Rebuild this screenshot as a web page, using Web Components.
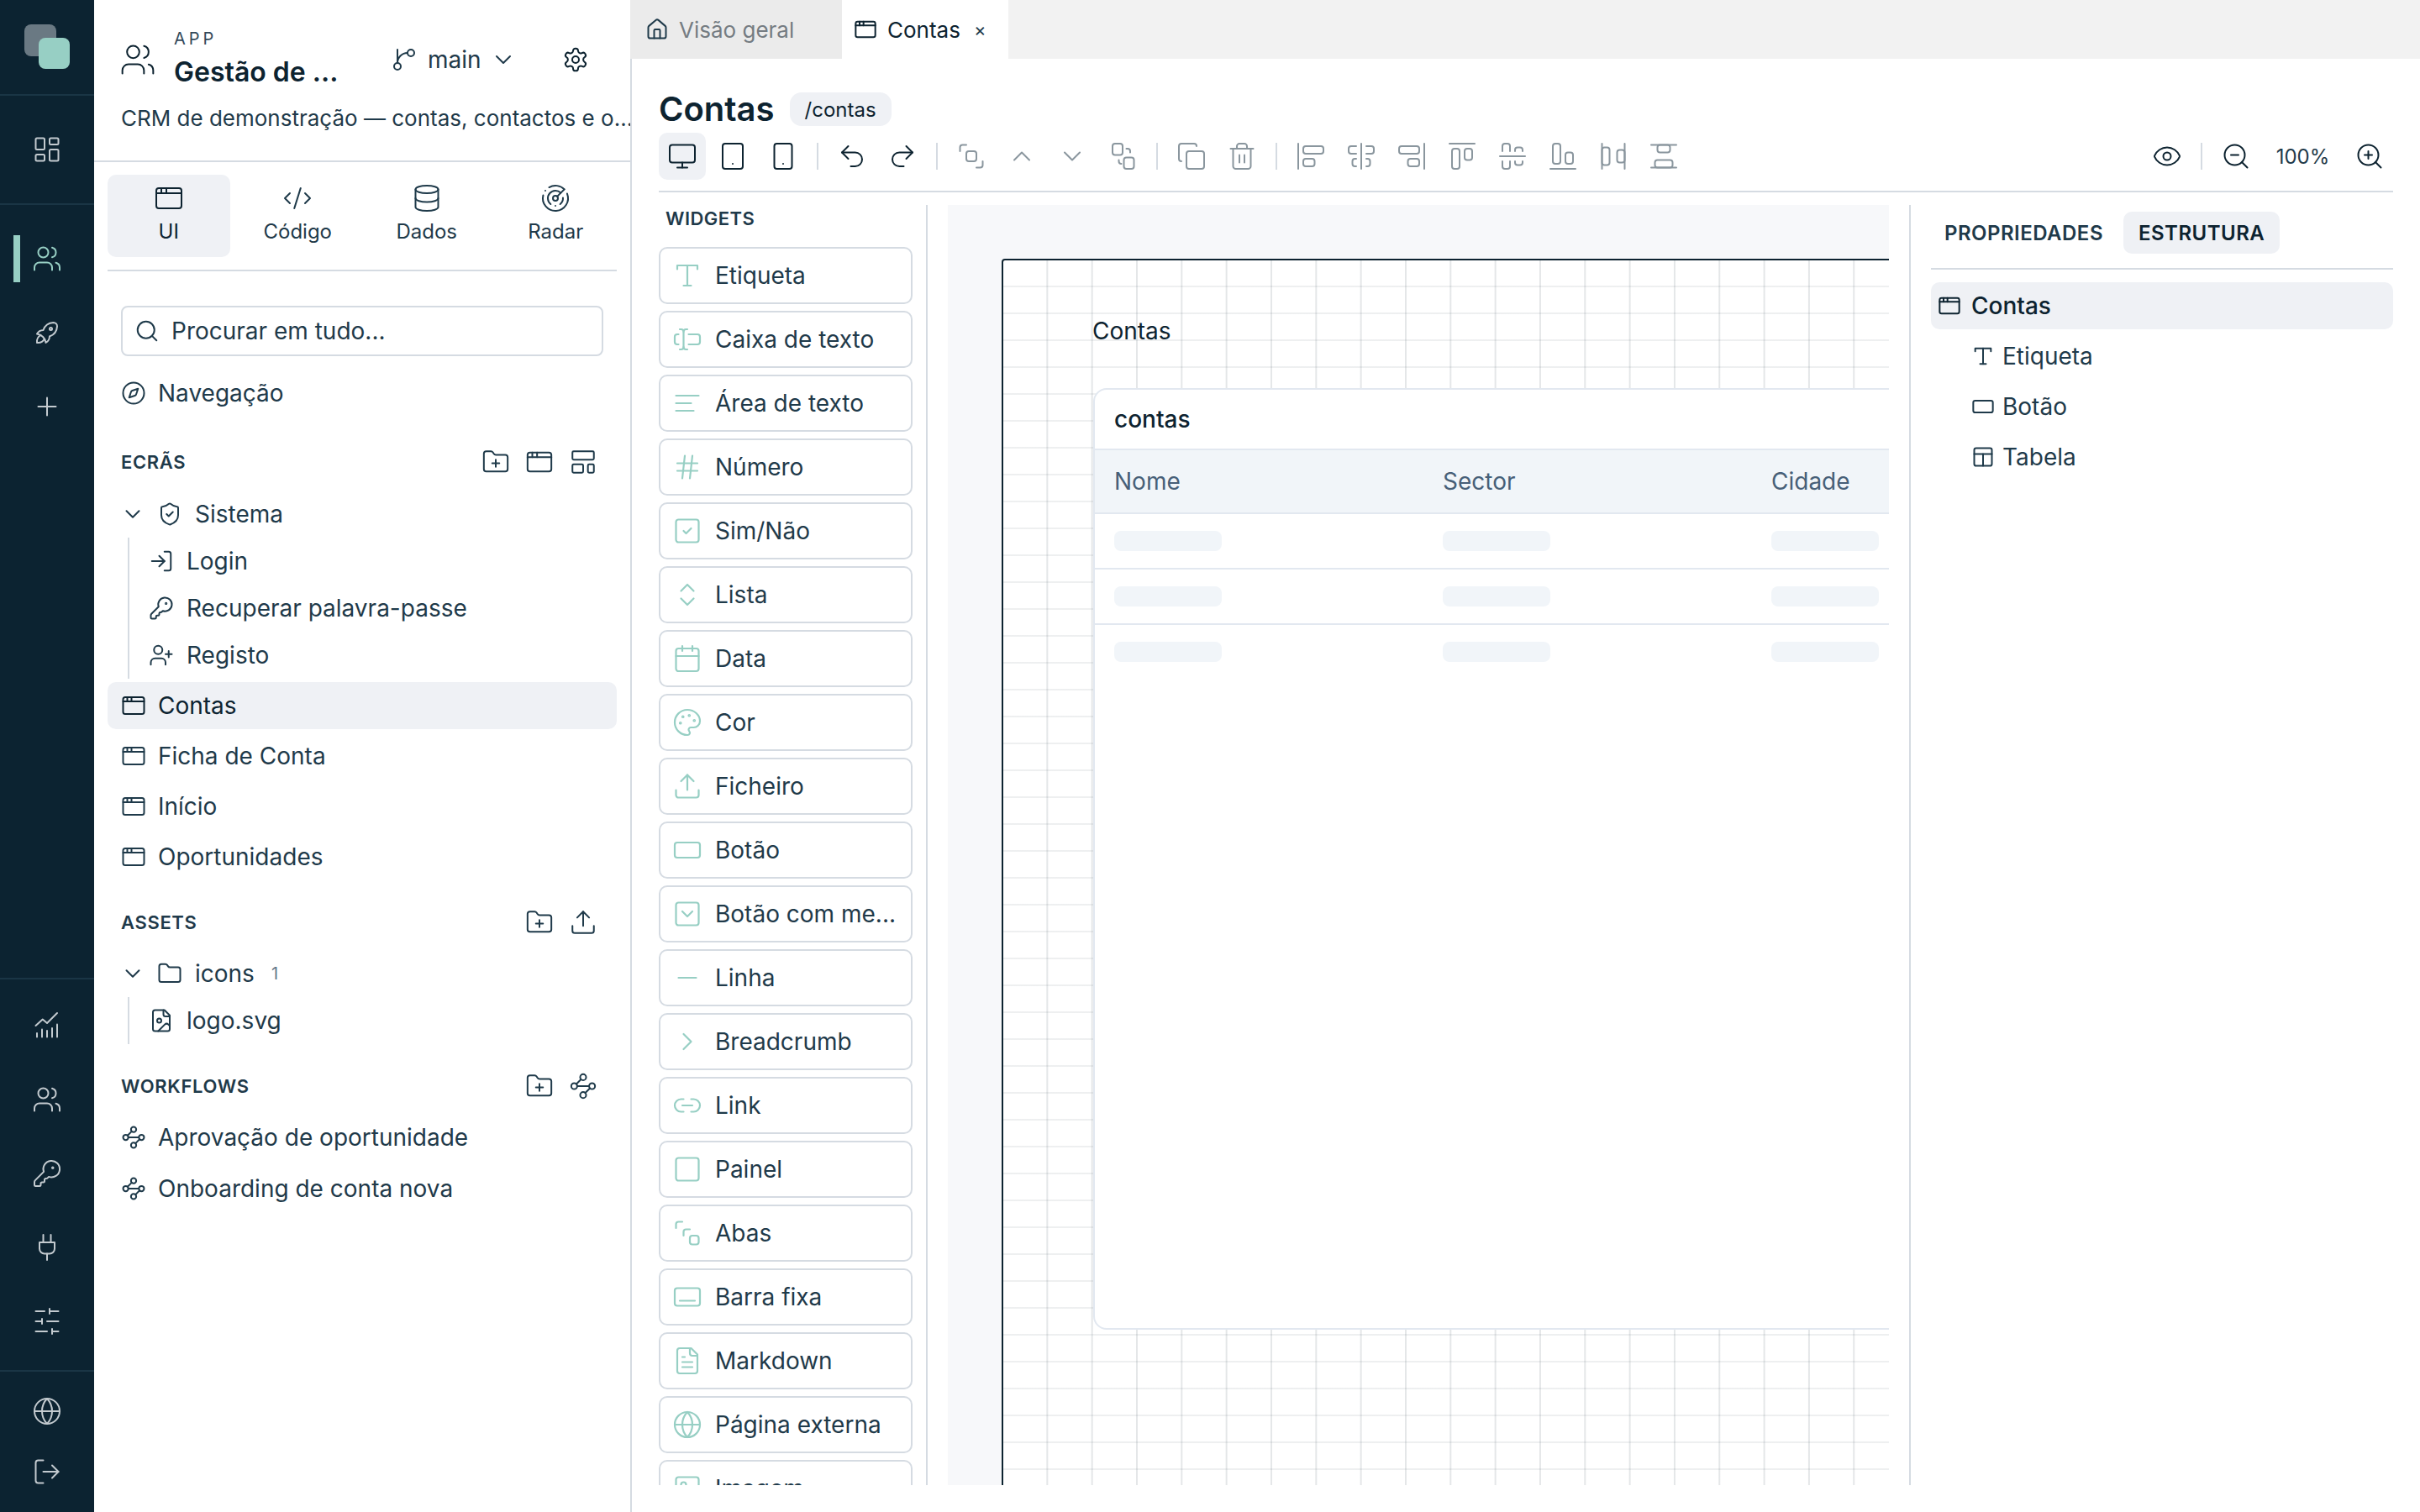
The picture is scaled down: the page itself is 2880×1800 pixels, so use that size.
<!doctype html>
<html lang="pt">
<head>
<meta charset="utf-8">
<title>Gestão de Contas</title>
<style>
html,body{margin:0;padding:0;width:2880px;height:1800px;overflow:hidden;background:#fff;font-family:Inter,"Noto Sans",sans-serif;color:#1f3a4a}
</style>
</head>
<body>
<app-shell>
	<app-rail slot="rail"></app-rail>
	<app-sidebar slot="side">
		<search-box>Procurar em tudo...</search-box>
		<tree-row icon="compass" style="margin-top:16px">Navegação</tree-row>

		<section-head icons="folderPlus window template" style="margin-top:32px">ECRÃS</section-head>
		<tree-row icon="shield" chevron style="margin-top:12px">Sistema</tree-row>
		<tree-group>
			<tree-row icon="login" child>Login</tree-row>
			<tree-row icon="key" child>Recuperar palavra-passe</tree-row>
			<tree-row icon="userPlus" child>Registo</tree-row>
		</tree-group>
		<tree-row icon="window" active style="margin-top:4px">Contas</tree-row>
		<tree-row icon="window" style="margin-top:4px">Ficha de Conta</tree-row>
		<tree-row icon="window" style="margin-top:4px">Início</tree-row>
		<tree-row icon="window" style="margin-top:4px">Oportunidades</tree-row>

		<section-head icons="folderPlus upload" style="margin-top:28px">ASSETS</section-head>
		<tree-row icon="folder" chevron count="1" style="margin-top:11px">icons</tree-row>
		<tree-group>
			<tree-row icon="fileImage" child>logo.svg</tree-row>
		</tree-group>

		<section-head icons="folderPlus flow" style="margin-top:28px">WORKFLOWS</section-head>
		<tree-row icon="flow" style="margin-top:11px">Aprovação de oportunidade</tree-row>
		<tree-row icon="flow" style="margin-top:5px">Onboarding de conta nova</tree-row>
	</app-sidebar>
	<app-main slot="main">
		<widget-panel slot="widgets">
			<widget-item icon="type">Etiqueta</widget-item>
			<widget-item icon="textInput">Caixa de texto</widget-item>
			<widget-item icon="lines">Área de texto</widget-item>
			<widget-item icon="hash">Número</widget-item>
			<widget-item icon="squareCheck">Sim/Não</widget-item>
			<widget-item icon="upDown">Lista</widget-item>
			<widget-item icon="calendar">Data</widget-item>
			<widget-item icon="palette">Cor</widget-item>
			<widget-item icon="upload">Ficheiro</widget-item>
			<widget-item icon="rect">Botão</widget-item>
			<widget-item icon="squareDown">Botão com me...</widget-item>
			<widget-item icon="minus">Linha</widget-item>
			<widget-item icon="right">Breadcrumb</widget-item>
			<widget-item icon="link">Link</widget-item>
			<widget-item icon="square">Painel</widget-item>
			<widget-item icon="tabs">Abas</widget-item>
			<widget-item icon="bar">Barra fixa</widget-item>
			<widget-item icon="fileText">Markdown</widget-item>
			<widget-item icon="globe">Página externa</widget-item>
			<widget-item icon="image">Imagem</widget-item>
		</widget-panel>
		<design-canvas slot="canvas"></design-canvas>
		<outline-panel slot="outline"></outline-panel>
	</app-main>
</app-shell>

<script>
const W = 'M20 20a2 2 0 0 0 2-2V8a2 2 0 0 0-2-2h-7.9a2 2 0 0 1-1.69-.9L9.6 3.9A2 2 0 0 0 7.93 3H4a2 2 0 0 0-2 2v13a2 2 0 0 0 2 2Z';
const p = (...d) => d.map(x => `<path d="${x}"/>`).join("");
const r = (x, y, w, h, rx = 2) => `<rect x="${x}" y="${y}" width="${w}" height="${h}" rx="${rx}"/>`;
const c = (x, y, n) => `<circle cx="${x}" cy="${y}" r="${n}"/>`;

const ICONS = {
	dashboard: r(3,3,7,9,1) + r(14,3,7,5,1) + r(14,12,7,9,1) + r(3,16,7,5,1),
	users: p('M16 21v-2a4 4 0 0 0-4-4H6a4 4 0 0 0-4 4v2','M22 21v-2a4 4 0 0 0-3-3.87','M16 3.13a4 4 0 0 1 0 7.75') + c(9,7,4),
	rocket: p('M4 13a8 8 0 0 1 7 7a6 6 0 0 0 3-5a9 9 0 0 0 6-8a3 3 0 0 0-3-3a9 9 0 0 0-8 6a6 6 0 0 0-5 3','M7 14a6 6 0 0 0-3 6a6 6 0 0 0 6-3') + c(15,9,1),
	plus: p('M12 5v14','M5 12h14'),
	chart: p('M3 12l5.5-5 3.5 3 8-8','M4 21v-3','M8 21v-6','M12 21v-5','M16 21v-7','M20 21v-10'),
	key: p('M2.586 17.414A2 2 0 0 0 2 18.828V21a1 1 0 0 0 1 1h3a1 1 0 0 0 1-1v-1a1 1 0 0 1 1-1h1a1 1 0 0 0 1-1v-1a1 1 0 0 1 1-1h.172a2 2 0 0 0 1.414-.586l.814-.814a6.5 6.5 0 1 0-4-4z') + c(16.5,7.5,.5),
	plug: p('M12 22v-5','M9 8V2','M15 8V2','M18 8v5a4 4 0 0 1-4 4h-4a4 4 0 0 1-4-4V8Z'),
	sliders: p('M21 4h-7','M10 4H3','M21 12h-9','M8 12H3','M21 20h-5','M12 20H3','M14 2v4','M8 10v4','M16 18v4'),
	globe: c(12,12,10) + p('M12 2a14.5 14.5 0 0 0 0 20a14.5 14.5 0 0 0 0-20','M2 12h20'),
	logout: p('M9 21H5a2 2 0 0 1-2-2V5a2 2 0 0 1 2-2h4','m16 17 5-5-5-5','M21 12H9'),
	branch: p('M15 6a9 9 0 0 0-9 9V3') + c(18,6,3) + c(6,18,3),
	down: p('m6 9 6 6 6-6'),
	up: p('m18 15-6-6-6 6'),
	right: p('m9 18 6-6-6-6'),
	gear: p('M12.22 2h-.44a2 2 0 0 0-2 2v.18a2 2 0 0 1-1 1.73l-.43.25a2 2 0 0 1-2 0l-.15-.08a2 2 0 0 0-2.73.73l-.22.38a2 2 0 0 0 .73 2.73l.15.1a2 2 0 0 1 1 1.72v.51a2 2 0 0 1-1 1.74l-.15.09a2 2 0 0 0-.73 2.73l.22.38a2 2 0 0 0 2.73.73l.15-.08a2 2 0 0 1 2 0l.43.25a2 2 0 0 1 1 1.73V20a2 2 0 0 0 2 2h.44a2 2 0 0 0 2-2v-.18a2 2 0 0 1 1-1.73l.43-.25a2 2 0 0 1 2 0l.15.08a2 2 0 0 0 2.73-.73l.22-.39a2 2 0 0 0-.73-2.73l-.15-.08a2 2 0 0 1-1-1.74v-.5a2 2 0 0 1 1-1.74l.15-.09a2 2 0 0 0 .73-2.73l-.22-.38a2 2 0 0 0-2.73-.73l-.15.08a2 2 0 0 1-2 0l-.43-.25a2 2 0 0 1-1-1.73V4a2 2 0 0 0-2-2z') + c(12,12,3),
	window: r(2,4,20,16) + p('M2 8h20','M6 4v4','M10 4v4'),
	code: p('m18 16 4-4-4-4','m6 8-4 4 4 4','m14.5 4-5 16'),
	database: '<ellipse cx="12" cy="5" rx="9" ry="3"/>' + p('M3 5v14a9 3 0 0 0 18 0V5','M3 12a9 3 0 0 0 18 0'),
	radar: p('M19.07 4.93A10 10 0 0 0 6.99 3.34','M4 6h.01','M2.29 9.62A10 10 0 1 0 21.31 8.35','M16.24 7.76A6 6 0 1 0 8.23 16.67','M12 18h.01','M17.99 11.66A6 6 0 0 1 15.77 16.67','m13.41 10.59 5.66-5.66') + c(12,12,2),
	search: c(11,11,8) + p('m21 21-4.3-4.3'),
	compass: c(12,12,10) + p('m16.24 7.76-1.804 5.411a2 2 0 0 1-1.265 1.265L7.76 16.24l1.804-5.411a2 2 0 0 1 1.265-1.265z'),
	folder: p(W),
	folderPlus: p(W,'M12 10v6','M9 13h6'),
	template: r(3,3,18,7,1) + r(3,14,9,7,1) + r(16,14,5,7,1),
	shield: p('M20 13c0 5-3.5 7.5-7.66 8.95a1 1 0 0 1-.67-.01C7.5 20.5 4 18 4 13V6a1 1 0 0 1 1-1c2 0 4.5-1.2 6.24-2.72a1.17 1.17 0 0 1 1.52 0C14.51 3.81 17 5 19 5a1 1 0 0 1 1 1z','m9 12 2 2 4-4'),
	login: p('m10 17 5-5-5-5','M15 12H3','M15 3h4a2 2 0 0 1 2 2v14a2 2 0 0 1-2 2h-4'),
	userPlus: p('M16 21v-2a4 4 0 0 0-4-4H6a4 4 0 0 0-4 4v2','M19 8v6','M22 11h-6') + c(9,7,4),
	fileImage: p('M15 2H6a2 2 0 0 0-2 2v16a2 2 0 0 0 2 2h12a2 2 0 0 0 2-2V7Z','M14 2v4a2 2 0 0 0 2 2h4','m20 17-1.296-1.296a2.41 2.41 0 0 0-3.408 0L9 22') + c(10,12,2),
	upload: p('M21 15v4a2 2 0 0 1-2 2H5a2 2 0 0 1-2-2v-4','m17 8-5-5-5 5','M12 3v12'),
	flow: c(12,4.5,2.5) + c(4.5,12,2.5) + c(19.5,12,2.5) + c(12,19.5,2.5) + p('m10.2 6.3-3.9 3.9','M7 12h10','m13.8 17.7 3.9-3.9'),
	home: p('M15 21v-8a1 1 0 0 0-1-1h-4a1 1 0 0 0-1 1v8','M3 10a2 2 0 0 1 .709-1.528l7-5.999a2 2 0 0 1 2.582 0l7 5.999A2 2 0 0 1 21 10v9a2 2 0 0 1-2 2H5a2 2 0 0 1-2-2z'),
	monitor: r(2,3,20,14) + p('M8 21h8','M12 17v4'),
	tablet: r(4,2,16,20) + p('M12 18h.01'),
	phone: r(5,2,14,20) + p('M12 18h.01'),
	undo: p('M9 14 4 9l5-5','M4 9h10.5a5.5 5.5 0 0 1 0 11H11'),
	redo: p('m15 14 5-5-5-5','M20 9H9.5a5.5 5.5 0 0 0 0 11H13'),
	group: p('M3 8V5a2 2 0 0 1 2-2h3','M21 16v3a2 2 0 0 1-2 2h-3') + r(8,8,8,8),
	ungroup: r(4,2,8,9) + r(13,13,8,9) + p('M15 6h1a2 2 0 0 1 2 2v1','M9 15v1a2 2 0 0 0 2 2h0'),
	copy: r(8,8,14,14) + p('M4 16c-1.1 0-2-.9-2-2V4c0-1.1.9-2 2-2h10c1.1 0 2 .9 2 2'),
	trash: p('M3 6h18','M19 6v14c0 1-1 2-2 2H7c-1 0-2-1-2-2V6','M8 6V4c0-1 1-2 2-2h4c1 0 2 1 2 2v2','M10 11v6','M14 11v6'),
	alignL: r(6,14,9,6) + r(6,4,16,6) + p('M2 2v20'),
	alignC: p('M12 2v20','M8 10H4a2 2 0 0 1-2-2V6c0-1.1.9-2 2-2h4','M16 10h4a2 2 0 0 0 2-2V6a2 2 0 0 0-2-2h-4','M8 20H7a2 2 0 0 1-2-2v-2c0-1.1.9-2 2-2h1','M16 14h1a2 2 0 0 1 2 2v2a2 2 0 0 1-2 2h-1'),
	alignR: r(2,4,16,6) + r(9,14,9,6) + p('M22 22V2'),
	alignT: r(4,6,6,16) + r(14,6,6,9) + p('M22 2H2'),
	alignM: p('M2 12h20','M10 16v4a2 2 0 0 1-2 2H6a2 2 0 0 1-2-2v-4','M10 8V4a2 2 0 0 0-2-2H6a2 2 0 0 0-2 2v4','M20 16v1a2 2 0 0 1-2 2h-2a2 2 0 0 1-2-2v-1','M14 8V7c0-1.1.9-2 2-2h2a2 2 0 0 1 2 2v1'),
	alignB: r(4,2,6,16) + r(14,9,6,9) + p('M22 22H2'),
	spaceH: r(3,5,6,14) + r(15,7,6,10) + p('M3 2v20','M21 2v20'),
	spaceV: r(5,15,14,6) + r(7,3,10,6) + p('M2 21h20','M2 3h20'),
	eye: p('M2.062 12.348a1 1 0 0 1 0-.696 10.75 10.75 0 0 1 19.876 0 1 1 0 0 1 0 .696 10.75 10.75 0 0 1-19.876 0') + c(12,12,3),
	zoomOut: c(11,11,8) + p('m21 21-4.35-4.35','M8 11h6'),
	zoomIn: c(11,11,8) + p('m21 21-4.35-4.35','M8 11h6','M11 8v6'),
	type: p('M4 7V4h16v3','M9 20h6','M12 4v16'),
	textInput: p('M12 20h-1a2 2 0 0 1-2-2 2 2 0 0 1-2 2H6','M13 8h7a2 2 0 0 1 2 2v4a2 2 0 0 1-2 2h-7','M5 16H4a2 2 0 0 1-2-2v-4a2 2 0 0 1 2-2h1','M6 4h1a2 2 0 0 1 2 2 2 2 0 0 1 2-2h1','M9 6v12'),
	lines: p('M21 6H3','M15 12H3','M17 18H3'),
	hash: p('M4 9h16','M4 15h16','M10 3 8 21','M16 3l-2 18'),
	squareCheck: r(3,3,18,18) + p('m9 12 2 2 4-4'),
	upDown: p('m7 15 5 5 5-5','m7 9 5-5 5 5'),
	calendar: r(3,4,18,18) + p('M8 2v4','M16 2v4','M3 10h18'),
	palette: p('M12 22a1 1 0 0 1 0-20 10 9 0 0 1 10 9 5 5 0 0 1-5 5h-2.25a1.75 1.75 0 0 0-1.4 2.8l.3.4a1.75 1.75 0 0 1-1.4 2.8z') + c(13.5,6.5,.5) + c(17.5,10.5,.5) + c(6.5,12.5,.5) + c(8.5,7.5,.5),
	rect: r(2,6,20,12),
	squareDown: r(3,3,18,18) + p('m16 10-4 4-4-4'),
	minus: p('M5 12h14'),
	link: p('M9 17H7A5 5 0 0 1 7 7h2','M15 7h2a5 5 0 1 1 0 10h-2','M8 12h8'),
	square: r(3,3,18,18),
	tabs: p('M3 8V5a2 2 0 0 1 2-2h3','M9 14v-3a2 2 0 0 1 2-2h3') + r(14,14,7,7),
	bar: r(2,5,20,14) + p('M6 15h12'),
	fileText: p('M15 2H6a2 2 0 0 0-2 2v16a2 2 0 0 0 2 2h12a2 2 0 0 0 2-2V7Z','M14 2v4a2 2 0 0 0 2 2h4','M10 9H8','M16 13H8','M16 17H8'),
	image: r(3,3,18,18) + c(9,9,2) + p('m21 15-3.086-3.086a2 2 0 0 0-2.828 0L6 21'),
	table: r(3,3,18,18) + p('M3 9h18','M12 9v12'),
};

class XIcon extends HTMLElement {
	constructor() {
		super();
		this.attachShadow({ mode: "open" });
	}
	connectedCallback() {
		const size = this.getAttribute("size") || 30;
		const sw = this.getAttribute("sw") || 2;
		this.shadowRoot.innerHTML = `
		<style>
		:host { display: inline-flex; flex: none; width: ${size}px; height: ${size}px; }
		svg { width: 100%; height: 100%; fill: none; stroke: currentColor; stroke-width: ${sw}; stroke-linecap: round; stroke-linejoin: round; }
		svg * { vector-effect: non-scaling-stroke; }
		</style>
		<svg viewBox="0 0 24 24">${ICONS[this.getAttribute("name")] || ""}</svg>`;
	}
}

// every other element is markup + styles in an open shadow root
const define = (tag, html) => customElements.define(tag, class extends HTMLElement {
	constructor() {
		super();
		this.attachShadow({ mode: "open" }).innerHTML = typeof html === "function" ? "" : html;
	}
	connectedCallback() {
		if (typeof html === "function") this.shadowRoot.innerHTML = html(this);
	}
});

define("app-shell", `
	<style>
	:host { display: flex; width: 2880px; height: 1800px; overflow: hidden; }
	</style>
	<slot name="rail"></slot><slot name="side"></slot><slot name="main"></slot>`);

define("rail-btn", el => `
	<style>
	:host { display: flex; align-items: center; justify-content: center; height: ${el.getAttribute("h") || 88}px; color: #c3cacf; position: relative; }
	:host([active]) { color: #97cfc4; }
	:host([active])::before { content: ""; position: absolute; left: 16px; top: 16px; width: 8px; height: 56px; background: #97cfc4; }
	</style>
	<x-icon name="${el.getAttribute("icon")}" size="36"></x-icon>`);

define("app-rail", `
	<style>
	:host { display: flex; flex-direction: column; width: 112px; height: 1800px; background: #0c2331; }
	.logo { height: 112px; flex: none; border-bottom: 2px solid #1a3545; position: relative; }
	.logo i { position: absolute; width: 38px; height: 38px; border-radius: 8px; }
	.logo i:first-child { left: 29px; top: 29px; background: #6a7983; }
	.logo i:last-child { left: 46px; top: 45px; width: 37px; height: 37px; background: #97cfc4; }
	.dash { height: 128px; flex: none; border-bottom: 2px solid #1a3545; display: flex; flex-direction: column; justify-content: center; }
	.mid { flex: 1; padding-top: 20px; border-bottom: 2px solid #1a3545; }
	.tools { flex: none; padding: 11px 0 14px; border-bottom: 2px solid #1a3545; }
	.foot { flex: none; height: 167px; padding-top: 11px; box-sizing: border-box; }
	</style>
	<div class="logo"><i></i><i></i></div>
	<div class="dash"><rail-btn icon="dashboard"></rail-btn></div>
	<div class="mid">
		<rail-btn icon="users" active></rail-btn>
		<rail-btn icon="rocket"></rail-btn>
		<rail-btn icon="plus"></rail-btn>
	</div>
	<div class="tools">
		<rail-btn icon="chart"></rail-btn>
		<rail-btn icon="users"></rail-btn>
		<rail-btn icon="key"></rail-btn>
		<rail-btn icon="plug"></rail-btn>
		<rail-btn icon="sliders"></rail-btn>
	</div>
	<div class="foot">
		<rail-btn icon="globe" h="72"></rail-btn>
		<rail-btn icon="logout" h="72"></rail-btn>
	</div>`);

define("side-tab", el => `
	<style>
	:host { display: flex; flex-direction: column; align-items: center; height: 98px; box-sizing: border-box; padding-top: 10px; border-radius: 10px; font-size: 24px; line-height: 30px; color: #1f3a4a; }
	:host([active]) { background: #eff1f5; color: #0d2330; }
	span { margin-top: 7px; }
	</style>
	<x-icon name="${el.getAttribute("icon")}" size="36"></x-icon>
	<span><slot></slot></span>`);

define("app-sidebar", `
	<style>
	:host { display: block; width: 638px; height: 1800px; flex: none; box-sizing: border-box; background: #fff; color: #1f3a4a; font-size: 28px; }
	header { height: 191px; box-sizing: border-box; padding: 34px 48px 0 30px; border-bottom: 0; }
	.top { display: flex; align-items: center; height: 74px; }
	.name { width: 240px; margin-left: 21px; flex: none; }
	.app { font-size: 20px; line-height: 24px; letter-spacing: .2em; color: #33495a; }
	.title { font-size: 32px; line-height: 44px; font-weight: 600; color: #0d2330; margin-top: 6px; white-space: nowrap; }
	.branch { display: flex; align-items: center; margin-left: 18px; color: #1f3a4a; }
	.branch span { margin: 0 10px 0 12px; width: 64px; }
	.gear { margin-left: 54px; color: #0d2330; }
	.desc { margin: 15px 0 0 2px; font-size: 26px; line-height: 36px; white-space: nowrap; color: #1f3a4a; }
	.rule { height: 2px; background: #d5dbe2; }
	.tabs { margin: 0 16px; padding: 15px 0; display: grid; grid-template-columns: repeat(4, 1fr); gap: 8px; border-bottom: 2px solid #d5dbe2; }
	.list { padding: 41px 16px 0; }
	</style>
	<header>
		<div class="top">
			<x-icon name="users" size="44" style="color:#0d2330"></x-icon>
			<div class="name">
				<div class="app">APP</div>
				<div class="title">Gestão de ...</div>
			</div>
			<div class="branch">
				<x-icon name="branch" size="32"></x-icon><span>main</span><x-icon name="down" size="32"></x-icon>
			</div>
			<x-icon class="gear" name="gear" size="32"></x-icon>
		</div>
		<div class="desc">CRM de demonstração — contas, contactos e o...</div>
	</header>
	<div class="rule"></div>
	<div class="tabs">
		<side-tab icon="window" active>UI</side-tab>
		<side-tab icon="code">Código</side-tab>
		<side-tab icon="database">Dados</side-tab>
		<side-tab icon="radar">Radar</side-tab>
	</div>
	<div class="list"><slot></slot></div>`);

define("search-box", `
	<style>
	:host { display: flex; align-items: center; gap: 14px; width: 574px; height: 60px; margin-left: 0; box-sizing: border-box; padding-left: 14px; margin-left: 16px; border: 2px solid #d5dbe2; border-radius: 8px; font-size: 28px; color: #1f3a4a; }
	</style>
	<x-icon name="search" size="30"></x-icon><slot></slot>`);

define("tree-row", el => {
	const child = el.hasAttribute("child");
	const chevron = el.hasAttribute("chevron");
	const count = el.getAttribute("count");
	return `
	<style>
	:host { display: flex; align-items: center; height: 56px; box-sizing: border-box; border-radius: 10px; font-size: 28px; white-space: nowrap; padding-left: ${child ? 23 : chevron ? 15 : 16}px; gap: ${child ? 15 : 14}px; color: #1f3a4a; }
	:host([active]) { background: #eff1f5; color: #0d2330; }
	.after { margin-left: -1px; }
	.count { font-size: 20px; color: #66788a; margin-left: 6px; }
	</style>
	${chevron ? `<x-icon name="down" size="30"></x-icon>` : ""}
	<x-icon name="${el.getAttribute("icon")}" size="30" ${chevron ? 'style="margin-right:1px"' : ""}></x-icon>
	<slot></slot>
	${count ? `<span class="count">${count}</span>` : ""}`;
});

define("tree-group", `
	<style>
	:host { display: block; margin-left: 24px; border-left: 2px solid #d5dbe2; }
	</style>
	<slot></slot>`);

define("section-head", el => `
	<style>
	:host { display: flex; align-items: center; height: 44px; padding: 0 23px 0 16px; font-size: 22px; font-weight: 600; letter-spacing: .03em; color: #1f3a4a; }
	.icons { margin-left: auto; display: flex; gap: 18px; }
	</style>
	<slot></slot>
	<div class="icons">${el.getAttribute("icons").split(" ").map(n => `<x-icon name="${n}" size="34"></x-icon>`).join("")}</div>`);

define("file-tabs", `
	<style>
	:host { display: flex; height: 70px; flex: none; background: #f2f2f2; font-size: 26px; }
	.tab { display: flex; align-items: center; gap: 12px; height: 70px; box-sizing: border-box; }
	.off { width: 252px; padding-left: 18px; background: #ebebeb; color: #757c82; }
	.off x-icon { color: #1f3a4a; }
	.on { width: 198px; padding-left: 14px; background: #fff; color: #0d2330; }
	.x { font-size: 22px; margin-left: 4px; color: #1f3a4a; }
	</style>
	<div class="tab off"><x-icon name="home" size="28"></x-icon>Visão geral</div>
	<div class="tab on"><x-icon name="window" size="28"></x-icon>Contas<span class="x">×</span></div>`);

define("tool-btn", el => `
	<style>
	:host { display: flex; align-items: center; justify-content: center; width: 56px; height: 56px; border-radius: 10px; color: #0d2330; flex: none; }
	:host([active]) { background: #eff1f5; }
	:host([off]) { color: #8a969e; }
	</style>
	<x-icon name="${el.getAttribute("icon")}" size="${el.getAttribute("size") || 36}"></x-icon>`);

define("tool-sep", `
	<style>
	:host { display: block; width: 2px; height: 32px; margin: 0 8px; background: #d5dbe2; flex: none; }
	</style>`);

define("tool-bar", `
	<style>
	:host { display: flex; align-items: center; gap: 4px; height: 56px; padding-bottom: 13px; border-bottom: 2px solid #d5dbe2; margin-top: 8px; }
	.zoom { width: 95px; text-align: center; font-size: 24px; color: #1f3a4a; }
	.push { margin-left: auto; }
	</style>
	<tool-btn icon="monitor" active></tool-btn>
	<tool-btn icon="tablet"></tool-btn>
	<tool-btn icon="phone"></tool-btn>
	<tool-sep></tool-sep>
	<tool-btn icon="undo"></tool-btn>
	<tool-btn icon="redo"></tool-btn>
	<tool-sep></tool-sep>
	<tool-btn icon="group" off></tool-btn>
	<tool-btn icon="up" off></tool-btn>
	<tool-btn icon="down" off></tool-btn>
	<tool-btn icon="ungroup" off></tool-btn>
	<tool-sep></tool-sep>
	<tool-btn icon="copy" off></tool-btn>
	<tool-btn icon="trash" off></tool-btn>
	<tool-sep></tool-sep>
	<tool-btn icon="alignL" off></tool-btn>
	<tool-btn icon="alignC" off></tool-btn>
	<tool-btn icon="alignR" off></tool-btn>
	<tool-btn icon="alignT" off></tool-btn>
	<tool-btn icon="alignM" off></tool-btn>
	<tool-btn icon="alignB" off></tool-btn>
	<tool-btn icon="spaceH" off></tool-btn>
	<tool-btn icon="spaceV" off></tool-btn>
	<tool-btn class="push" icon="eye"></tool-btn>
	<tool-sep></tool-sep>
	<tool-btn icon="zoomOut"></tool-btn>
	<span class="zoom">100%</span>
	<tool-btn icon="zoomIn"></tool-btn>`);

define("app-main", `
	<style>
	:host { display: flex; flex-direction: column; flex: 1; min-width: 0; height: 1800px; }
	.body { flex: 1; min-height: 0; display: flex; flex-direction: column; border-left: 2px solid #d5dbe2; padding: 0 32px 32px; }
	.title { display: flex; align-items: center; gap: 18px; height: 40px; margin-top: 40px; flex: none; }
	h1 { margin: 0; font-size: 40px; line-height: 40px; font-weight: 600; color: #0d2330; }
	.route { display: flex; align-items: center; height: 40px; padding: 0 18px; border-radius: 14px; background: #eff1f5; font-size: 24px; color: #0d2330; }
	.work { flex: 1; min-height: 0; display: flex; margin-top: 15px; }
	</style>
	<file-tabs></file-tabs>
	<div class="body">
		<div class="title"><h1>Contas</h1><span class="route">/contas</span></div>
		<tool-bar></tool-bar>
		<div class="work">
			<slot name="widgets"></slot>
			<slot name="canvas"></slot>
			<slot name="outline"></slot>
		</div>
	</div>`);

define("widget-panel", `
	<style>
	:host { display: flex; flex-direction: column; width: 320px; flex: none; box-sizing: border-box; border-right: 2px solid #d5dbe2; padding-right: 16px; overflow: hidden; }
	.label { height: 50px; flex: none; padding-left: 8px; font-size: 22px; line-height: 32px; font-weight: 600; letter-spacing: .02em; color: #1f3a4a; }
	.items { display: flex; flex-direction: column; gap: 8px; }
	</style>
	<div class="label">WIDGETS</div>
	<div class="items"><slot></slot></div>`);

define("widget-item", el => `
	<style>
	:host { display: flex; align-items: center; gap: 15px; flex: none; height: 68px; box-sizing: border-box; padding-left: 14px; border: 2px solid #d5dbe2; border-radius: 10px; font-size: 28px; white-space: nowrap; color: #1f3a4a; }
	x-icon { color: #97cfc4; }
	</style>
	<x-icon name="${el.getAttribute("icon")}" size="36" sw="2.2"></x-icon><slot></slot>`);

define("data-card", `
	<style>
	:host { display: block; position: absolute; left: 107px; top: 152px; width: 1175px; height: 1121px; box-sizing: border-box; background: #fff; border: 2px solid #e2e8f0; border-radius: 16px; font-size: 28px; color: #0d2330; }
	.name { height: 70px; display: flex; align-items: center; padding-left: 23px; font-weight: 500; border-bottom: 2px solid #e2e8f0; }
	.row { display: grid; grid-template-columns: repeat(3, 391px); padding-left: 23px; align-items: center; height: 64px; border-bottom: 2px solid #e2e8f0; }
	.row:last-child { border-bottom: 0; }
	.head { height: 74px; background: #f1f5f9; color: #475f78; border-radius: 0; margin: 0; }
	.row i { display: block; width: 128px; height: 24px; border-radius: 8px; background: #f1f5f9; }
	</style>
	<div class="name">contas</div>
	<div class="row head"><span>Nome</span><span>Sector</span><span>Cidade</span></div>
	<div class="row"><i></i><i></i><i></i></div>
	<div class="row"><i></i><i></i><i></i></div>
	<div class="row"><i></i><i></i><i></i></div>`);

define("design-canvas", `
	<style>
	:host { display: block; width: 1120px; flex: none; margin-left: 24px; background: #f7f8fa; overflow: hidden; }
	.frame {
		position: relative; width: 1284px; height: 1600px; margin: 64px 0 0 64px; background-color: #fff;
		border: 2px solid #0d2330; border-radius: 4px;
		background-image:
			linear-gradient(to right, transparent calc(100% - 1.5px), rgba(13,35,48,.11) calc(100% - 1.5px)),
			linear-gradient(to bottom, transparent calc(100% - 2px), rgba(13,35,48,.07) calc(100% - 2px));
		background-size: 53.333px 32px;
	}
	.label { position: absolute; left: 106px; top: 66px; font-size: 28px; line-height: 36px; color: #0d2330; }
	</style>
	<div class="frame">
		<span class="label">Contas</span>
		<data-card></data-card>
	</div>`);

define("outline-row", el => `
	<style>
	:host { display: flex; align-items: center; height: 56px; padding-left: ${el.hasAttribute("root") ? 8 : 48}px; gap: ${el.hasAttribute("root") ? 12 : 9}px; border-radius: 10px; font-size: 28px; color: #1f3a4a; }
	:host([root]) { background: #eff1f5; color: #0d2330; font-weight: 500; }
	</style>
	<x-icon name="${el.getAttribute("icon")}" size="28"></x-icon><slot></slot>`);

define("outline-panel", `
	<style>
	:host { display: block; flex: 1; min-width: 0; margin-left: 24px; box-sizing: border-box; border-left: 2px solid #d5dbe2; padding-left: 24px; }
	.tabs { display: flex; gap: 8px; padding: 8px 0 17px; border-bottom: 2px solid #d5dbe2; font-size: 24px; font-weight: 600; letter-spacing: .02em; color: #1f3a4a; }
	.tabs span { display: flex; align-items: center; height: 50px; padding: 0 16px; border-radius: 10px; }
	.tabs .on { background: #eff1f5; padding: 0 18px; color: #0d2330; }
	.tree { display: flex; flex-direction: column; gap: 4px; margin-top: 15px; }
	</style>
	<div class="tabs"><span>PROPRIEDADES</span><span class="on">ESTRUTURA</span></div>
	<div class="tree">
		<outline-row icon="window" root>Contas</outline-row>
		<outline-row icon="type">Etiqueta</outline-row>
		<outline-row icon="rect">Botão</outline-row>
		<outline-row icon="table">Tabela</outline-row>
	</div>`);

customElements.define("x-icon", XIcon);
</script>
</body>
</html>
